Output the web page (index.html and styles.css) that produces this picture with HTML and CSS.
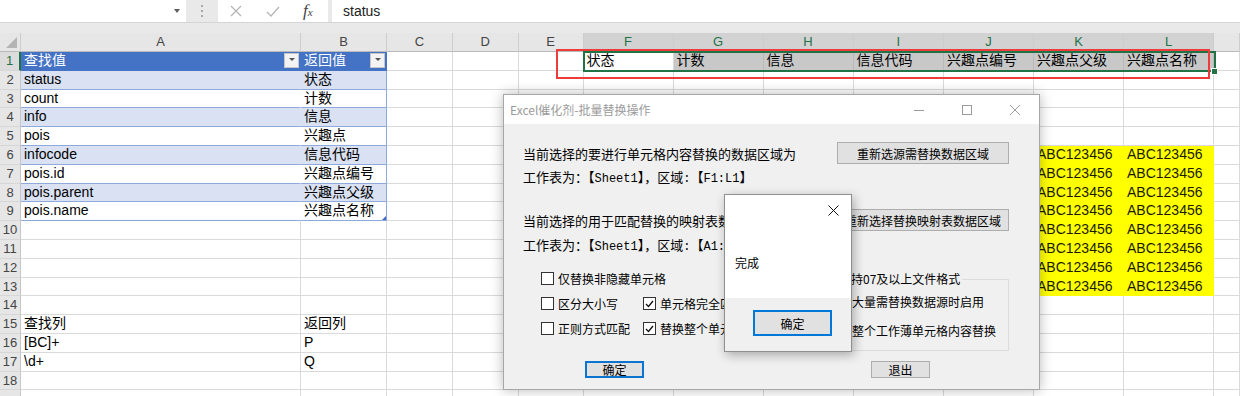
FILE: index.html
```html
<!DOCTYPE html>
<html lang="zh-CN">
<head>
<meta charset="utf-8">
<title>Excel催化剂-批量替换操作</title>
<link rel="stylesheet" href="styles.css">
</head>
<body>
<div class="app">
  <div class="fbar">
    <div class="namebox"><span class="nb-arrow"></span></div>
    <div class="grip"><svg width="2" height="12" viewBox="0 0 2 12"><rect x="0" y="0" width="2" height="2"/><rect x="0" y="5" width="2" height="2"/><rect x="0" y="10" width="2" height="2"/></svg></div>
    <div class="fbtns">
      <svg class="ic-x" width="12" height="12" viewBox="0 0 12 12"><path d="M1 1L11 11M11 1L1 11"/></svg>
      <svg class="ic-ok" width="14" height="11" viewBox="0 0 14 11"><path d="M1 6L5 10L13 1"/></svg>
      <span class="fx">f<small>x</small></span>
    </div>
    <div class="finput">status</div>
  </div>
  <div class="fgap"></div>

  <div class="sheet">
    <div class="row hdr">
      <span class="corner"><svg width="11" height="11" viewBox="0 0 11 11"><path d="M11 0V11H0Z"/></svg></span>
      <span>A</span><span>B</span><span>C</span><span>D</span><span>E</span>
      <span class="hs">F</span><span class="hs">G</span><span class="hs">H</span><span class="hs">I</span><span class="hs">J</span><span class="hs">K</span><span class="hs">L</span><span></span>
    </div>
    <div class="row">
      <span class="rh rhs">1</span>
      <span class="th">查找值<i class="flt"></i></span>
      <span class="th">返回值<i class="flt"></i></span>
      <span></span><span></span><span></span>
      <span>状态</span>
      <span class="sel">计数</span><span class="sel">信息</span><span class="sel">信息代码</span><span class="sel">兴趣点编号</span><span class="sel">兴趣点父级</span><span class="sel">兴趣点名称</span>
      <span></span>
    </div>
    <div class="row">
      <span class="rh">2</span><span class="bd">status</span><span class="bd tr">状态</span>
      <span></span><span></span><span></span><span></span><span></span><span></span><span></span><span></span><span></span><span></span><span></span>
    </div>
    <div class="row">
      <span class="rh">3</span><span class="tw">count</span><span class="tw tr">计数</span>
      <span></span><span></span><span></span><span></span><span></span><span></span><span></span><span></span><span></span><span></span><span></span>
    </div>
    <div class="row">
      <span class="rh">4</span><span class="bd">info</span><span class="bd tr">信息</span>
      <span></span><span></span><span></span><span></span><span></span><span></span><span></span><span></span><span></span><span></span><span></span>
    </div>
    <div class="row">
      <span class="rh">5</span><span class="tw">pois</span><span class="tw tr">兴趣点</span>
      <span></span><span></span><span></span><span></span><span></span><span></span><span></span><span></span><span></span><span></span><span></span>
    </div>
    <div class="row">
      <span class="rh">6</span><span class="bd">infocode</span><span class="bd tr">信息代码</span>
      <span></span><span></span><span></span><span></span><span></span><span></span><span></span><span></span>
      <span class="y">ABC123456</span><span class="y">ABC123456</span><span></span>
    </div>
    <div class="row">
      <span class="rh">7</span><span class="tw">pois.id</span><span class="tw tr">兴趣点编号</span>
      <span></span><span></span><span></span><span></span><span></span><span></span><span></span><span></span>
      <span class="y">ABC123456</span><span class="y">ABC123456</span><span></span>
    </div>
    <div class="row">
      <span class="rh">8</span><span class="bd">pois.parent</span><span class="bd tr">兴趣点父级</span>
      <span></span><span></span><span></span><span></span><span></span><span></span><span></span><span></span>
      <span class="y">ABC123456</span><span class="y">ABC123456</span><span></span>
    </div>
    <div class="row">
      <span class="rh">9</span><span class="tw">pois.name</span><span class="tw tr rz">兴趣点名称</span>
      <span></span><span></span><span></span><span></span><span></span><span></span><span></span><span></span>
      <span class="y">ABC123456</span><span class="y">ABC123456</span><span></span>
    </div>
    <div class="row">
      <span class="rh">10</span><span></span><span></span>
      <span></span><span></span><span></span><span></span><span></span><span></span><span></span><span></span>
      <span class="y">ABC123456</span><span class="y">ABC123456</span><span></span>
    </div>
    <div class="row">
      <span class="rh">11</span><span></span><span></span>
      <span></span><span></span><span></span><span></span><span></span><span></span><span></span><span></span>
      <span class="y">ABC123456</span><span class="y">ABC123456</span><span></span>
    </div>
    <div class="row">
      <span class="rh">12</span><span></span><span></span>
      <span></span><span></span><span></span><span></span><span></span><span></span><span></span><span></span>
      <span class="y">ABC123456</span><span class="y">ABC123456</span><span></span>
    </div>
    <div class="row">
      <span class="rh">13</span><span></span><span></span>
      <span></span><span></span><span></span><span></span><span></span><span></span><span></span><span></span>
      <span class="y">ABC123456</span><span class="y">ABC123456</span><span></span>
    </div>
    <div class="row">
      <span class="rh">14</span><span></span><span></span>
      <span></span><span></span><span></span><span></span><span></span><span></span><span></span><span></span><span></span><span></span><span></span>
    </div>
    <div class="row">
      <span class="rh">15</span><span>查找列</span><span>返回列</span>
      <span></span><span></span><span></span><span></span><span></span><span></span><span></span><span></span><span></span><span></span><span></span>
    </div>
    <div class="row">
      <span class="rh">16</span><span>[BC]+</span><span>P</span>
      <span></span><span></span><span></span><span></span><span></span><span></span><span></span><span></span><span></span><span></span><span></span>
    </div>
    <div class="row">
      <span class="rh">17</span><span>\d+</span><span>Q</span>
      <span></span><span></span><span></span><span></span><span></span><span></span><span></span><span></span><span></span><span></span><span></span>
    </div>
    <div class="row">
      <span class="rh">18</span><span></span><span></span>
      <span></span><span></span><span></span><span></span><span></span><span></span><span></span><span></span><span></span><span></span><span></span>
    </div>
    <div class="row">
      <span class="rh"></span><span></span><span></span>
      <span></span><span></span><span></span><span></span><span></span><span></span><span></span><span></span><span></span><span></span><span></span>
    </div>

    <div class="selbox"></div>
    <div class="fh"></div>
  </div>

  <div class="mark"></div>

  <div class="win main">
    <div class="title">
      <span>Excel催化剂-批量替换操作</span>
      <div class="ctrls">
        <span><svg width="10" height="10" viewBox="0 0 10 10"><path d="M0 5.5H10"/></svg></span>
        <span><svg width="10" height="10" viewBox="0 0 10 10"><rect x="0.5" y="0.5" width="9" height="9"/></svg></span>
        <span><svg width="10" height="10" viewBox="0 0 10 10"><path d="M0 0L10 10M10 0L0 10"/></svg></span>
      </div>
    </div>
    <div class="body">
      <div class="line l1">
        <span>当前选择的要进行单元格内容替换的数据区域为</span>
        <span class="btn wide">重新选源需替换数据区域</span>
      </div>
      <div class="line l2">
        <span>工作表为：【<span class="mono">Sheet1</span>】，区域<span class="mono">:</span>【<span class="mono">F1:L1</span>】</span>
      </div>
      <div class="line l3">
        <span>当前选择的用于匹配替换的映射表数据区域为</span>
        <span class="btn wide">重新选择替换映射表数据区域</span>
      </div>
      <div class="line l4">
        <span>工作表为：【<span class="mono">Sheet1</span>】，区域<span class="mono">:</span>【<span class="mono">A1:B9</span>】</span>
      </div>
      <div class="opts">
        <div class="optgrid">
          <label class="cbx"><span class="box"></span>仅替换非隐藏单元格</label>
          <span></span>
          <label class="cbx"><span class="box"></span>区分大小写</label>
          <label class="cbx"><span class="box"><svg width="9" height="8" viewBox="0 0 9 8"><path d="M1 4L3.5 6.5L8 1"/></svg></span>单元格完全匹配</label>
          <label class="cbx"><span class="box"></span>正则方式匹配</label>
          <label class="cbx"><span class="box"><svg width="9" height="8" viewBox="0 0 9 8"><path d="M1 4L3.5 6.5L8 1"/></svg></span>替换整个单元格内容</label>
        </div>
        <fieldset class="grp">
          <legend>仅支持07及以上文件格式</legend>
          <label class="cbx"><span class="box"></span>有大量需替换数据源时启用</label>
          <label class="cbx"><span class="box"></span>对整个工作薄单元格内容替换</label>
        </fieldset>
      </div>
      <div class="actions">
        <span class="btn sm def">确定</span>
        <span class="btn sm">退出</span>
      </div>
    </div>
  </div>

  <div class="win msg">
    <div class="msg-title">
      <span class="msg-close"><svg width="11" height="11" viewBox="0 0 11 11"><path d="M0.5 0.5L10.5 10.5M10.5 0.5L0.5 10.5"/></svg></span>
    </div>
    <div class="msg-text">完成</div>
    <div class="msg-foot">
      <span class="btn ok">确定</span>
    </div>
  </div>
</div>
</body>
</html>
```

FILE: styles.css
```css
* { box-sizing: border-box; margin: 0; padding: 0; }
html, body { width: 1240px; height: 396px; overflow: hidden; background: #fff; }
body { font-family: "Liberation Sans", "Noto Sans CJK SC", sans-serif; color: #000; }
.app { position: relative; width: 1240px; height: 396px; overflow: hidden; }

/* formula bar */
.fbar { display: flex; height: 23px; background: #e9e9e9; border-bottom: 1px solid #d4d4d4; }
.namebox { width: 186px; background: #fff; display: flex; align-items: center; justify-content: flex-end; padding-right: 6px; }
.nb-arrow { width: 0; height: 0; border-left: 3.5px solid transparent; border-right: 3.5px solid transparent; border-top: 4px solid #5f5f5f; }
.grip { width: 32px; display: flex; align-items: center; justify-content: center; }
.grip svg { fill: #a8a8a8; }
.fbtns { width: 110px; background: #fff; display: flex; align-items: center; padding-left: 12px; margin-right: 4px; }
.fbtns svg { fill: none; stroke: #b5b5b5; stroke-width: 1.3; }
.ic-ok { margin-left: 24px; }
.fx { margin-left: 23px; font-family: "Liberation Serif", serif; font-style: italic; font-size: 17px; color: #444; line-height: 20px; }
.fx small { font-size: 11px; }
.finput { flex: 1; background: #fff; padding-left: 11px; font-size: 14px; line-height: 22px; color: #222; }
.fgap { height: 10px; background: #e9e9e9; }

/* sheet */
.sheet { position: relative; }
.row { display: grid; grid-template-columns: 21px 280px 86px 66px 65.5px 65px 90px 90px 90px 90.5px 90px 90px 90px 1fr; height: 18.8px; }
.row > span { border-right: 1px solid #dadada; border-bottom: 1px solid #dadada; padding: 0 3px; font-size: 14px; line-height: 17.8px; white-space: nowrap; overflow: hidden; }
.hdr { height: 19px; }
.hdr > span { background: #e6e6e6; color: #444; text-align: center; font-size: 13px; line-height: 18px; border-right-color: #cdcdcd; border-bottom-color: #bababa; }
.hdr > .hs { background: #d2d2d2; color: #217346; }
.hdr > .corner { display: flex; align-items: flex-end; justify-content: flex-end; padding: 0 3px 3px 0; }
.corner svg { fill: #b4b4b4; }
.row > .rh { background: #e6e6e6; color: #444; text-align: center; font-size: 13px; padding: 0; border-right-color: #c6c6c6; border-bottom-color: #d6d6d6; }
.row > .rhs { color: #217346; background: #dcdcdc; border-right: 2px solid #217346; }

.row > .th { background: #4472c4; color: #fff; border-right-color: #4472c4; border-bottom-color: #4472c4; display: flex; align-items: center; justify-content: space-between; padding-right: 1px; }
.flt { width: 15px; height: 15px; background: #f3f3f3; border: 1px solid #c6c6c6; display: flex; justify-content: center; padding-top: 4px; }
.flt::after { content: ""; width: 0; height: 0; border-left: 3px solid transparent; border-right: 3px solid transparent; border-top: 3px solid #555; }
.row > .bd { background: #d9e1f2; border-right-color: #d9e1f2; border-bottom-color: #8ea9db; }
.row > .tw { border-right-color: #fff; border-bottom-color: #8ea9db; }
.row > .tr { border-right-color: #8ea9db; }
.row > .rz { position: relative; }
.rz::after { content: ""; position: absolute; right: 0; bottom: 0; width: 0; height: 0; border-left: 4px solid transparent; border-bottom: 4px solid #3b67c0; }
.row > .sel { background: #c8c8c8; border-right-color: #b9b9b9; }
.row > .y { background: #ffff00; border-right-color: #ffff00; border-bottom-color: #ffff00; color: #1a1a00; }

.selbox { position: absolute; left: 582.5px; top: 18px; width: 633px; height: 21px; border: 2px solid #217346; }
.fh { position: absolute; left: 1211px; top: 35px; width: 7px; height: 7px; background: #217346; border: 1px solid #fff; }

.mark { position: absolute; left: 556px; top: 49px; width: 654px; height: 30px; border: 2px solid #ee3b3b; }

/* windows */
.win { position: absolute; font-family: "Noto Sans CJK SC", sans-serif; color: #000; }
.main { left: 503px; top: 94px; width: 537px; height: 296px; background: #f0f0f0; border: 1px solid #a7a7a7; box-shadow: 0 0 12px rgba(0,0,0,.28); }
.title { height: 29px; background: #fff; display: flex; align-items: center; padding-left: 6px; font-size: 12px; color: #9b9b9b; }
.ctrls { margin-left: auto; display: flex; height: 100%; }
.ctrls span { width: 48px; display: flex; align-items: center; justify-content: center; }
.ctrls svg { stroke: #9b9b9b; fill: none; stroke-width: 1; }
.body { padding: 0 30px 0 19px; font-size: 13px; }
.line { display: flex; align-items: center; justify-content: space-between; white-space: nowrap; }
.l1 { margin-top: 18px; height: 22px; }
.l2 { margin-top: 6px; height: 16px; line-height: 16px; }
.l3 { margin-top: 23px; height: 22px; }
.l4 { margin-top: 7px; height: 16px; line-height: 16px; }
.mono { font-family: "Liberation Mono", monospace; font-size: 12px; }
.btn { background: #e1e1e1; border: 1px solid #adadad; font-size: 12px; display: flex; align-items: center; justify-content: center; color: #000; white-space: nowrap; }
.btn.wide { width: 172px; height: 22px; }
.opts { display: flex; justify-content: space-between; align-items: flex-start; margin-top: 12px; }
.optgrid { display: grid; grid-template-columns: 102px auto; grid-auto-rows: 25px; margin-left: 18px; font-size: 12px; }
.cbx { display: flex; align-items: center; gap: 4px; white-space: nowrap; height: 25px; }
.box { width: 13px; height: 13px; border: 1px solid #333; background: #fff; display: flex; align-items: center; justify-content: center; flex: none; }
.box svg { fill: none; stroke: #111; stroke-width: 1.3; }
.grp { width: 197px; margin-top: 5px; border: 1px solid #dcdcdc; padding: 2px 8px 7px 10px; font-size: 12px; }
.grp legend { padding: 0 2px 0 4px; line-height: 16px; }
.grp .cbx + .cbx { margin-top: 4px; }
.actions { display: flex; gap: 227px; margin: 10px 0 0 62px; }
.btn.sm { width: 59px; height: 17px; }
.btn.def { border: 2px solid #0a74d0; }

.msg { left: 724px; top: 194px; width: 128px; height: 158px; background: #fff; border: 1px solid #8f8f8f; box-shadow: 2px 3px 10px rgba(0,0,0,.3); display: flex; flex-direction: column; }
.msg-title { height: 30px; display: flex; justify-content: flex-end; }
.msg-close { width: 36px; display: flex; align-items: center; justify-content: center; }
.msg-close svg { stroke: #111; fill: none; stroke-width: 1; }
.msg-text { margin: 30px 0 0 10px; font-size: 12px; line-height: 16px; }
.msg-foot { margin-top: auto; height: 53px; background: #f0f0f0; padding: 12px 0 0 28px; }
.btn.ok { width: 79px; height: 26px; border: 2px solid #0078d7; }
```
